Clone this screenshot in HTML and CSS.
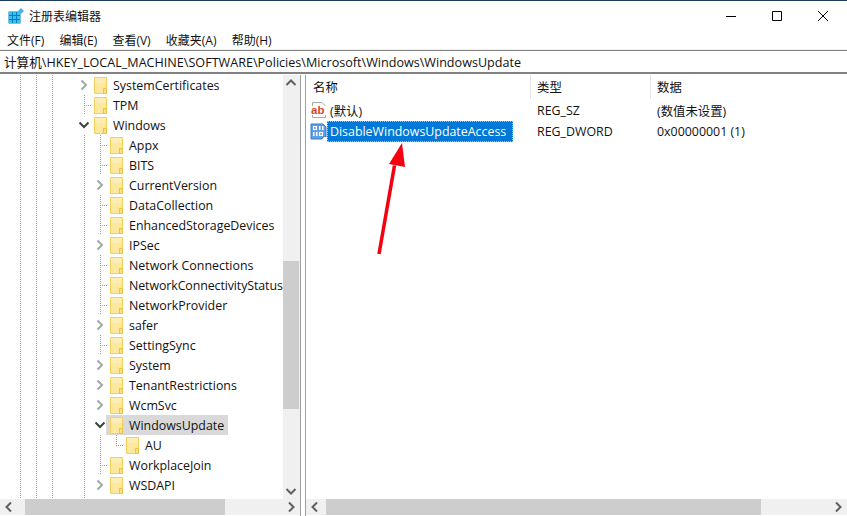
FILE: index.html
```html
<!DOCTYPE html>
<html lang="zh-CN">
<head>
<meta charset="utf-8">
<title>注册表编辑器</title>
<link rel="stylesheet" href="styles.css">
</head>
<body>
<svg class="defs" width="0" height="0">
  <symbol id="folder" viewBox="0 0 13 17">
    <path d="M.5.5H12.500V16.500H.5Z" fill="#fee89c" stroke="#f2cf5a"/>
    <path d="M1 1H12V6H1Z" fill="#ffeeb4"/>
    <path d="M9.500 16.500V11.500H12.500V16.500Z" fill="#fbdf84" stroke="#ecc246"/>
  </symbol>
  <symbol id="closed" viewBox="0 0 12 12">
    <path d="M3.500 1.500 8 6 3.500 10.500" fill="none" stroke="#a6a6a6" stroke-width="2"/>
  </symbol>
  <symbol id="open" viewBox="0 0 12 12">
    <path d="M1.500 3.500 6 8 10.500 3.500" fill="none" stroke="#404040" stroke-width="2"/>
  </symbol>
  <symbol id="sb-up" viewBox="0 0 16 16"><path d="M3.500 10 8 5.500 12.500 10" fill="none" stroke="#606060" stroke-width="2"/></symbol>
  <symbol id="sb-down" viewBox="0 0 16 16"><path d="M3.500 6 8 10.500 12.500 6" fill="none" stroke="#606060" stroke-width="2"/></symbol>
  <symbol id="sb-left" viewBox="0 0 16 16"><path d="M10 3.500 5.500 8 10 12.500" fill="none" stroke="#606060" stroke-width="2"/></symbol>
  <symbol id="sb-right" viewBox="0 0 16 16"><path d="M6 3.500 10.500 8 6 12.500" fill="none" stroke="#606060" stroke-width="2"/></symbol>
</svg>
<div class="window">
  <header class="titlebar">
    <svg class="app-icon" width="16" height="16" viewBox="0 0 16 16">
      <rect x="0.500" y="3.500" width="12" height="12" fill="#0a7fb5"/>
      <g fill="#35c0f5">
        <rect x="1" y="4" width="3" height="3"/><rect x="5" y="4" width="3" height="3"/><rect x="9" y="4" width="3" height="3"/>
        <rect x="1" y="8" width="3" height="3"/><rect x="5" y="8" width="3" height="3"/><rect x="9" y="8" width="3" height="3"/>
        <rect x="1" y="12" width="3" height="3"/><rect x="5" y="12" width="3" height="3"/><rect x="9" y="12" width="3" height="3"/>
      </g>
      <path d="M13 0 16 3 13 6 10 3Z" fill="#45b5e8"/>
    </svg>
    <span class="title">注册表编辑器</span>
    <div class="controls">
      <svg width="10" height="10" viewBox="0 0 10 10"><path d="M0 5.500H10" stroke="#000"/></svg>
      <svg width="10" height="10" viewBox="0 0 10 10"><path d="M.5.5H9.500V9.500H.5Z" fill="none" stroke="#000"/></svg>
      <svg width="10" height="10" viewBox="0 0 10 10"><path d="M0 0 10 10M10 0 0 10" stroke="#000"/></svg>
    </div>
  </header>
  <nav class="menubar">
    <span>文件(F)</span><span>编辑(E)</span><span>查看(V)</span><span>收藏夹(A)</span><span>帮助(H)</span>
  </nav>
  <div class="address">计算机\HKEY_LOCAL_MACHINE\SOFTWARE\Policies\Microsoft\Windows\WindowsUpdate</div>
  <main class="panes">
    <section class="left-pane">
      <div class="tree-area">
        <div class="tree">
          <div class="row l1"><span class="twisty"><svg><use href="#closed"/></svg></span><span class="item"><svg class="folder"><use href="#folder"/></svg><span class="label">SystemCertificates</span></span></div>
          <div class="row l1"><span class="twisty leaf"><i></i></span><span class="item"><svg class="folder"><use href="#folder"/></svg><span class="label">TPM</span></span></div>
          <div class="row l1"><span class="twisty"><svg><use href="#open"/></svg></span><span class="item"><svg class="folder"><use href="#folder"/></svg><span class="label">Windows</span></span></div>
          <div class="children">
            <div class="row l2"><span class="twisty leaf"><i></i></span><span class="item"><svg class="folder"><use href="#folder"/></svg><span class="label">Appx</span></span></div>
            <div class="row l2"><span class="twisty leaf"><i></i></span><span class="item"><svg class="folder"><use href="#folder"/></svg><span class="label">BITS</span></span></div>
            <div class="row l2"><span class="twisty"><svg><use href="#closed"/></svg></span><span class="item"><svg class="folder"><use href="#folder"/></svg><span class="label">CurrentVersion</span></span></div>
            <div class="row l2"><span class="twisty leaf"><i></i></span><span class="item"><svg class="folder"><use href="#folder"/></svg><span class="label">DataCollection</span></span></div>
            <div class="row l2"><span class="twisty leaf"><i></i></span><span class="item"><svg class="folder"><use href="#folder"/></svg><span class="label">EnhancedStorageDevices</span></span></div>
            <div class="row l2"><span class="twisty"><svg><use href="#closed"/></svg></span><span class="item"><svg class="folder"><use href="#folder"/></svg><span class="label">IPSec</span></span></div>
            <div class="row l2"><span class="twisty leaf"><i></i></span><span class="item"><svg class="folder"><use href="#folder"/></svg><span class="label">Network Connections</span></span></div>
            <div class="row l2"><span class="twisty leaf"><i></i></span><span class="item"><svg class="folder"><use href="#folder"/></svg><span class="label tight">NetworkConnectivityStatus</span></span></div>
            <div class="row l2"><span class="twisty leaf"><i></i></span><span class="item"><svg class="folder"><use href="#folder"/></svg><span class="label">NetworkProvider</span></span></div>
            <div class="row l2"><span class="twisty"><svg><use href="#closed"/></svg></span><span class="item"><svg class="folder"><use href="#folder"/></svg><span class="label">safer</span></span></div>
            <div class="row l2"><span class="twisty leaf"><i></i></span><span class="item"><svg class="folder"><use href="#folder"/></svg><span class="label">SettingSync</span></span></div>
            <div class="row l2"><span class="twisty"><svg><use href="#closed"/></svg></span><span class="item"><svg class="folder"><use href="#folder"/></svg><span class="label">System</span></span></div>
            <div class="row l2"><span class="twisty"><svg><use href="#closed"/></svg></span><span class="item"><svg class="folder"><use href="#folder"/></svg><span class="label">TenantRestrictions</span></span></div>
            <div class="row l2"><span class="twisty"><svg><use href="#closed"/></svg></span><span class="item"><svg class="folder"><use href="#folder"/></svg><span class="label">WcmSvc</span></span></div>
            <div class="row l2"><span class="twisty"><svg><use href="#open"/></svg></span><span class="item selected"><svg class="folder"><use href="#folder"/></svg><span class="label">WindowsUpdate</span></span></div>
            <div class="row l3"><span class="twisty leaf elbow"><i></i></span><span class="item"><svg class="folder"><use href="#folder"/></svg><span class="label">AU</span></span></div>
            <div class="row l2"><span class="twisty leaf"><i></i></span><span class="item"><svg class="folder"><use href="#folder"/></svg><span class="label">WorkplaceJoin</span></span></div>
            <div class="row l2"><span class="twisty"><svg><use href="#closed"/></svg></span><span class="item"><svg class="folder"><use href="#folder"/></svg><span class="label">WSDAPI</span></span></div>
          </div>
        </div>
        <div class="vscroll">
          <svg class="sb-btn"><use href="#sb-up"/></svg>
          <div class="vtrack"><div class="vthumb"></div></div>
          <svg class="sb-btn"><use href="#sb-down"/></svg>
        </div>
      </div>
      <div class="hscroll">
        <svg class="sb-btn"><use href="#sb-left"/></svg>
        <div class="htrack"><div class="hthumb left-thumb"></div></div>
        <svg class="sb-btn"><use href="#sb-right"/></svg>
      </div>
    </section>
    <section class="right-pane">
      <div class="list-area">
        <div class="list-head">
          <span class="col-name">名称</span><span class="col-type">类型</span><span class="col-data">数据</span>
        </div>
        <div class="list-row">
          <span class="col-name">
            <svg class="value-icon" width="17" height="17" viewBox="0 0 17 17">
              <path d="M2.500.5H12L15.500 4V15.500H2.500Z" fill="#fff" stroke="#a8a8a8"/>
              <rect x="1" y="4" width="15" height="9" fill="#fff"/>
              <text class="ab" x="1" y="12">ab</text>
            </svg>
            <span class="value-name">(默认)</span>
          </span>
          <span class="col-type">REG_SZ</span><span class="col-data">(数值未设置)</span>
        </div>
        <div class="list-row">
          <span class="col-name">
            <svg class="value-icon" width="17" height="17" viewBox="0 0 17 17">
              <path d="M1 1H13L16 4V14L14 13 12 16H1Z" fill="#5f9fe8" stroke="#3d78c8"/>
              <g fill="#fff">
                <rect x="3" y="3" width="4" height="4"/><rect x="9" y="3" width="1.500" height="4"/><rect x="12" y="3" width="1.500" height="4"/>
                <rect x="3" y="9" width="1.500" height="4"/><rect x="6" y="9" width="1.500" height="4"/><rect x="9" y="9" width="4" height="4"/>
              </g>
              <g fill="#1f5fb5"><rect x="4.500" y="4" width="1" height="2"/><rect x="10.500" y="10" width="1" height="2"/></g>
            </svg>
            <span class="value-name active">DisableWindowsUpdateAccess</span>
          </span>
          <span class="col-type">REG_DWORD</span><span class="col-data">0x00000001 (1)</span>
        </div>
      </div>
      <div class="hscroll">
        <svg class="sb-btn"><use href="#sb-left"/></svg>
        <div class="htrack"><div class="hthumb right-thumb"></div></div>
        <svg class="sb-btn"><use href="#sb-right"/></svg>
      </div>
    </section>
  </main>
  <svg class="annotation" width="847" height="516" viewBox="0 0 847 516">
    <path d="M379 254 394.500 165.500" stroke="#f5000f" stroke-width="3.500" fill="none"/>
    <path d="M402 143 389 164 405 167Z" fill="#f5000f"/>
  </svg>
</div>
</body>
</html>
```
FILE: styles.css
```css
* { box-sizing: border-box; }
html, body { margin: 0; padding: 0; height: 516px; overflow: hidden; background: #fff; }
body {
  font-family: "Open Sans", "Noto Sans CJK SC", sans-serif;
  font-size: 12.4px;
  color: #111;
}
.defs { display: block; height: 0; }
.window {
  position: relative;
  width: 847px;
  height: 516px;
  display: flex;
  flex-direction: column;
  border-top: 1px solid #1b3d5e;
}
.titlebar {
  height: 29px;
  flex: none;
  display: flex;
  align-items: center;
  padding-left: 8px;
}
.app-icon { flex: none; }
.title { margin-left: 5px; font-size: 12px; }
.controls {
  margin-left: auto;
  display: flex;
  gap: 36px;
  padding-right: 19px;
}
.menubar {
  height: 20px;
  flex: none;
  display: flex;
  align-items: center;
  padding-left: 7px;
  gap: 15.200px;
  white-space: nowrap;
  background: #fff;
  font-size: 12px;
}
.address {
  height: 24px;
  flex: none;
  padding-left: 4px;
  display: flex;
  align-items: center;
  border-top: 1px solid #808080;
  border-bottom: 2px solid #828282;
  box-shadow: 0 -1px 0 #f0f0f0;
  white-space: nowrap;
  font-size: 12.600px;
}
.panes {
  flex: 1;
  min-height: 0;
  display: flex;
  padding-top: 1px;
}
.left-pane {
  width: 301px;
  flex: none;
  display: flex;
  flex-direction: column;
  border-right: 1px solid #a0a0a0;
}
.tree-area { flex: 1; min-height: 0; display: flex; }
.tree {
  width: 283px;
  flex: none;
  overflow: hidden;
  background-image:
    repeating-linear-gradient(#9a9a9a 0 1px, transparent 1px 2px),
    repeating-linear-gradient(#9a9a9a 0 1px, transparent 1px 2px),
    repeating-linear-gradient(#9a9a9a 0 1px, transparent 1px 2px),
    repeating-linear-gradient(#9a9a9a 0 1px, transparent 1px 2px);
  background-size: 1px 100%;
  background-repeat: no-repeat;
  background-position: 20px 0, 36px 0, 52px 0, 84px 0;
}
.children {
  background-image: repeating-linear-gradient(#9a9a9a 0 1px, transparent 1px 2px);
  background-size: 1px 100%;
  background-repeat: no-repeat;
  background-position: 100px 0;
}
.row {
  height: 20px;
  display: flex;
  align-items: center;
  white-space: nowrap;
}
.l1 { padding-left: 78px; }
.l2 { padding-left: 94px; }
.l3 { padding-left: 110px; }
.twisty {
  width: 12px;
  height: 20px;
  flex: none;
  display: flex;
  align-items: center;
  justify-content: flex-end;
  background: #fff;
}
.twisty svg { width: 12px; height: 12px; display: block; }
.twisty.leaf { background: none; }
.twisty.leaf i {
  width: 8px;
  height: 1px;
  margin-right: -2px;
  background: repeating-linear-gradient(90deg, #9a9a9a 0 1px, transparent 1px 2px);
}
.twisty.elbow {
  background: repeating-linear-gradient(#9a9a9a 0 1px, transparent 1px 2px) 6px 0 / 1px 10px no-repeat;
}
.item {
  height: 20px;
  display: flex;
  align-items: center;
  padding: 0 4px;
}
.item.selected { background: #d9d9d9; }
.folder { width: 13px; height: 17px; flex: none; display: block; }
.label { margin-left: 6px; }
.tight { letter-spacing: -0.100px; }
.vscroll {
  width: 17px;
  flex: none;
  display: flex;
  flex-direction: column;
  background: #f0f0f0;
}
.vtrack { flex: 1; min-height: 0; padding-top: 170px; }
.vthumb { height: 148px; background: #cdcdcd; width: 16px; }
.sb-btn { width: 16px; height: 16px; flex: none; display: block; }
.hscroll {
  height: 17px;
  flex: none;
  display: flex;
  background: #f0f0f0;
  border-bottom: 1px solid #fff;
  align-items: center;
}
.hscroll .sb-btn { margin: 0 1px; }
.htrack { flex: 1; min-width: 0; height: 16px; display: flex; }
.hthumb { background: #cdcdcd; height: 16px; }
.left-thumb { width: 200px; margin-left: 7px; }
.right-thumb { width: 435px; margin-left: 2px; }
.right-pane {
  flex: 1;
  min-width: 0;
  margin-left: 4px;
  display: flex;
  flex-direction: column;
  border-left: 1px solid #a0a0a0;
}
.list-area { flex: 1; min-height: 0; }
.list-head, .list-row {
  display: grid;
  grid-template-columns: 224px 120px 1fr;
  align-items: center;
  white-space: nowrap;
}
.list-head { height: 25px; align-items: start; }
.list-head span { padding-left: 7px; height: 24px; display: flex; align-items: center; }
.list-head span + span { padding-left: 6px; border-left: 1px solid #e5e5e5; }
.list-row { height: 21px; }
.list-row .col-type, .list-row .col-data { padding-left: 7px; }
.list-row .col-name { display: flex; align-items: center; padding-left: 4px; height: 21px; }
.value-icon { flex: none; display: block; }
.value-name { padding-left: 3px; }
.active {
  width: 186px;
  height: 21px;
  display: flex;
  align-items: center;
  background: #0078d7;
  color: #fff;
  outline: 1px dotted #ffb060;
  outline-offset: -1px;
}
.ab { font-family: "Liberation Sans", sans-serif; font-size: 11.500px; font-weight: 700; fill: #d9472b; }
.annotation { position: absolute; left: 0; top: -1px; pointer-events: none; }
```
